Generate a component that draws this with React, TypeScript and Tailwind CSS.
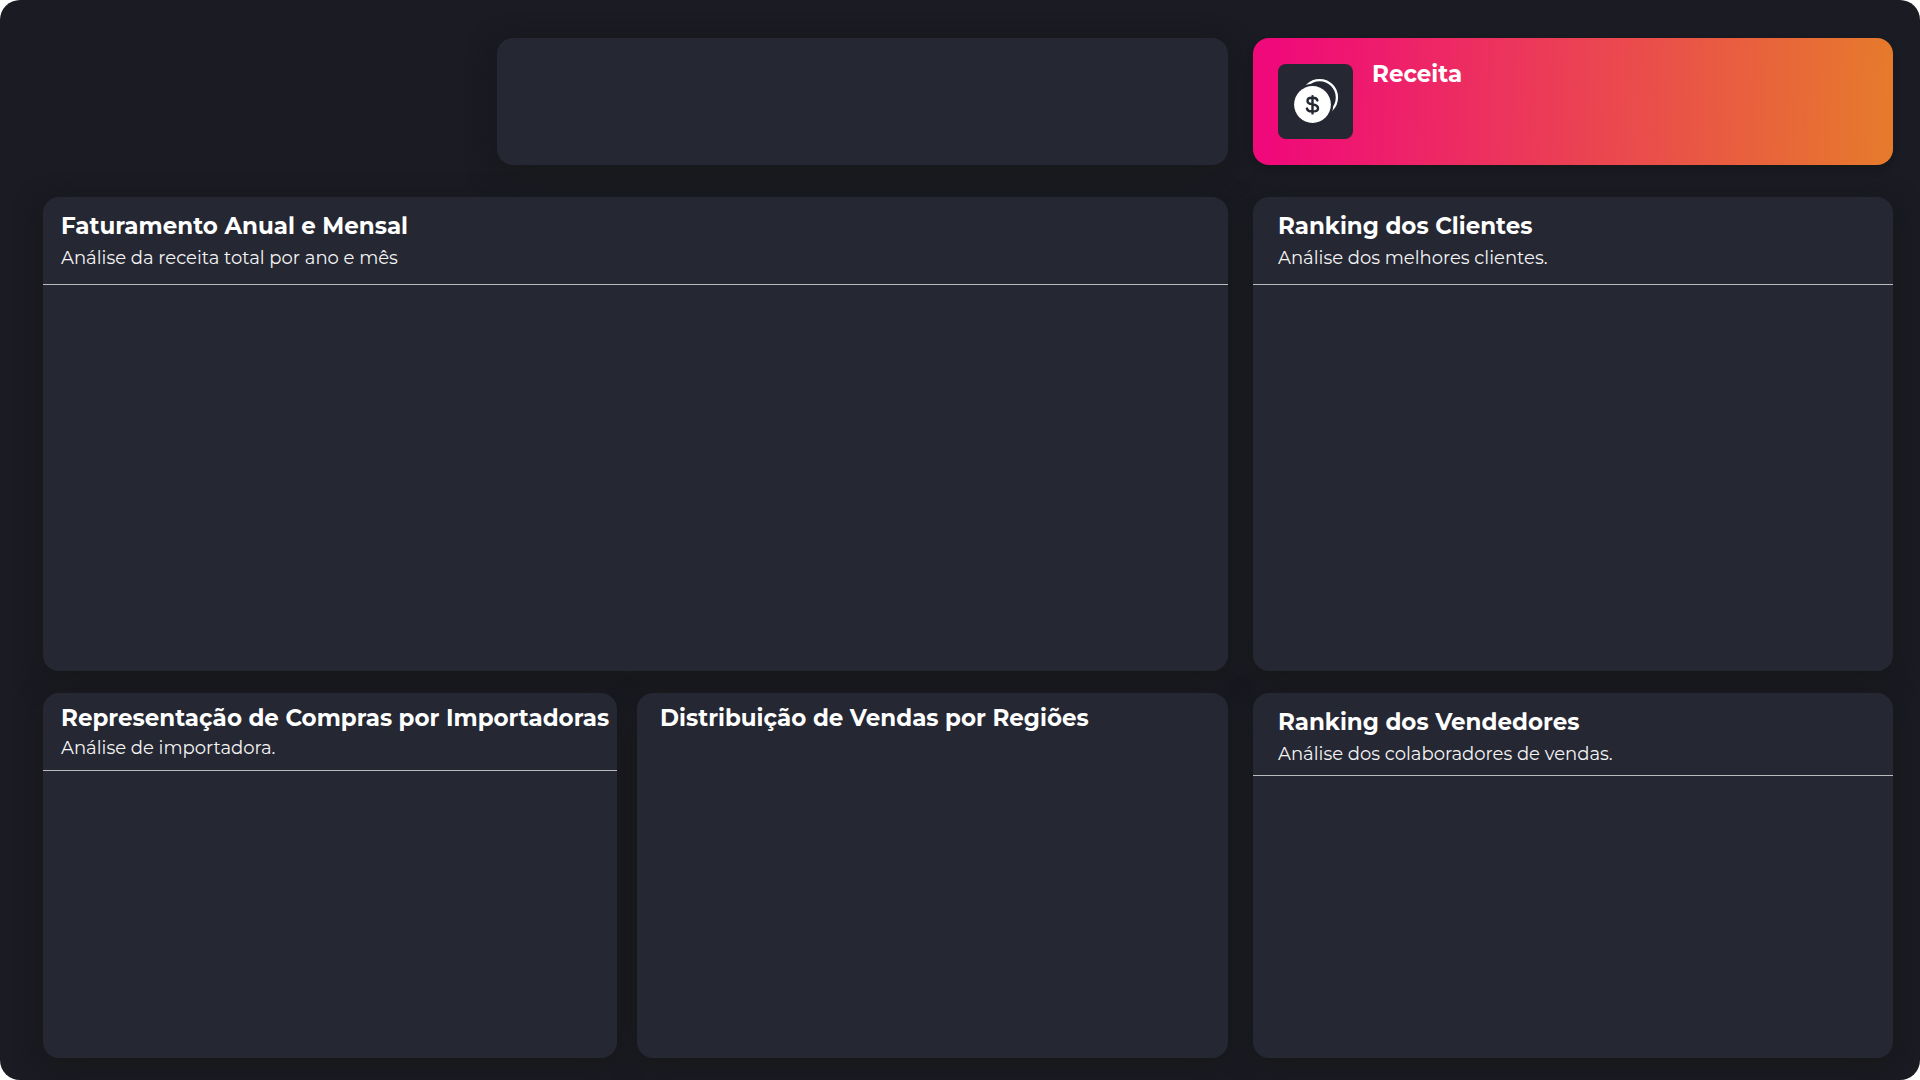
import type { ReactNode } from 'react';

// The shadow lives on a layer behind every card, so it never darkens a neighbour.
const CARD =
  "relative rounded-[16px] bg-[#252732] before:absolute before:inset-0 before:-z-10 before:rounded-[16px] before:shadow-[0_8px_28px_rgba(22,24,22,0.85)] before:content-['']";
const TITLE = 'whitespace-nowrap text-[23px] leading-[28px] font-bold text-white';
const SUB = 'whitespace-nowrap text-[18px] leading-[22px] font-normal text-[#f4f4f5]';

function Card({ className, children }: { className: string; children?: ReactNode }) {
  return <section className={`${CARD} ${className}`}>{children}</section>;
}

function CoinsIcon() {
  return (
    <svg className="size-[75px]" viewBox="0 0 75 75" fill="none">
      <circle cx="41.6" cy="33.4" r="17.3" stroke="#fff" strokeWidth="2.3" />
      <circle cx="34.5" cy="40.5" r="20.8" fill="#252732" />
      <circle cx="34.5" cy="40.5" r="18.4" fill="#fff" />
      <path
        d="M39.4 36.4c-.5-1.7-2.2-2.6-4.3-2.6h-1.4c-2.4 0-4.2 1.2-4.2 3.1 0 1.8 1.3 2.7 3.8 3.2l2.6.6c2.8.6 4.1 1.6 4.1 3.5 0 2.1-1.9 3.2-4.5 3.2h-1.9c-2.4 0-4.2-1-4.7-2.800M34.5 32.2v17.2"
        stroke="#252732"
        strokeWidth="2.4"
        strokeLinecap="round"
      />
    </svg>
  );
}

export default function App() {
  return (
    <div className="h-[1080px] w-[1920px] overflow-hidden bg-white font-['Montserrat','Inter',sans-serif]">
      <main className="isolate flex h-full w-full flex-col rounded-[20px] bg-[#1a1b23] pt-[38px] pr-[27px] pb-[22px] pl-[43px]">
        <div className="flex h-[127px] justify-end gap-[25px]">
          <Card className="w-[731px]" />
          <section className="flex w-[640px] gap-[19px] rounded-[16px] bg-linear-[92deg,#f0097a_3%,#e67a2c_99%] pl-[25px] shadow-[0_4px_6px_rgba(20,22,22,0.6)]">
            <div className="mt-[26px] size-[75px] rounded-[8px] bg-[#252732]">
              <CoinsIcon />
            </div>
            <h2 className={`${TITLE} mt-[22px]`}>Receita</h2>
          </section>
        </div>

        <div className="mt-[32px] flex h-[474px] gap-[25px]">
          <Card className="w-[1185px]">
            <header className="flex h-[88px] flex-col gap-[7px] border-b border-[#bcbcbe] pt-[15px] pl-[18px]">
              <h2 className={TITLE}>Faturamento Anual e Mensal</h2>
              <p className={SUB}>Análise da receita total por ano e mês</p>
            </header>
          </Card>
          <Card className="w-[640px]">
            <header className="flex h-[88px] flex-col gap-[7px] border-b border-[#bcbcbe] pt-[15px] pl-[25px]">
              <h2 className={TITLE}>Ranking dos Clientes</h2>
              <p className={SUB}>Análise dos melhores clientes.</p>
            </header>
          </Card>
        </div>

        <div className="mt-[22px] flex h-[365px]">
          <Card className="w-[574px]">
            <header className="flex h-[78px] flex-col gap-[5px] border-b border-[#bcbcbe] pt-[11px] pl-[18px]">
              <h2 className={TITLE}>Representação de Compras por Importadoras</h2>
              <p className={SUB}>Análise de importadora.</p>
            </header>
          </Card>
          <Card className="ml-[20px] w-[591px] pt-[11px] pl-[23px]">
            <h2 className={TITLE}>Distribuição de Vendas por Regiões</h2>
          </Card>
          <Card className="ml-[25px] w-[640px]">
            <header className="flex h-[83px] flex-col gap-[7px] border-b border-[#bcbcbe] pt-[15px] pl-[25px]">
              <h2 className={TITLE}>Ranking dos Vendedores</h2>
              <p className={SUB}>Análise dos colaboradores de vendas.</p>
            </header>
          </Card>
        </div>
      </main>
    </div>
  );
}
